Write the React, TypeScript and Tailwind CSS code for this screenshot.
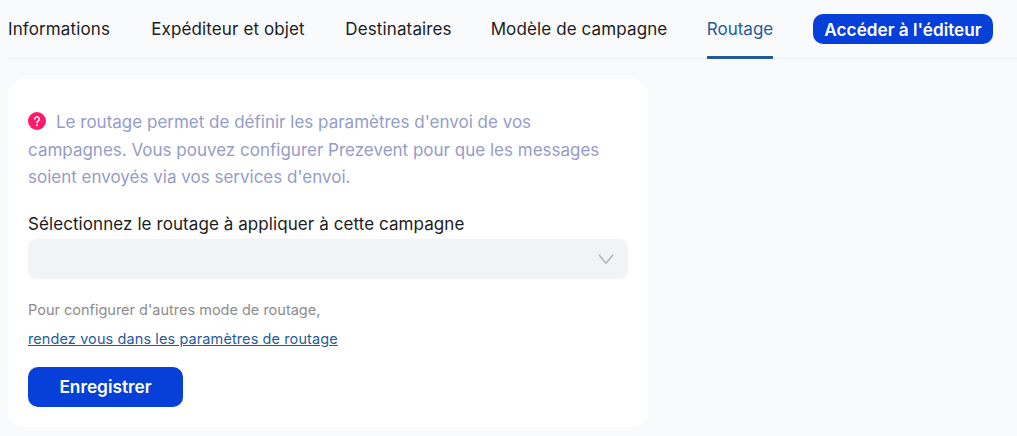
const tabs = [
  { label: 'Informations', width: 'w-[102px]' },
  { label: 'Expéditeur et objet', width: 'w-[156px]' },
  { label: 'Destinataires', width: 'w-[105px]' },
  { label: 'Modèle de campagne', width: 'w-[176px]' }
];

const App = () => {
  return (
    <div className="h-[436px] w-[1017px] overflow-hidden bg-[#f9fafc] pl-2 font-['Inter','Noto_Sans',sans-serif] text-[#1c1c21]">
      <nav className="flex h-[59px] items-center gap-10 border-b border-[#eef0f4]">
        {tabs.map((tab) => (
          <a key={tab.label} className={`flex h-[59px] items-center justify-center pt-[2px] text-[17px] tracking-[0.12px] whitespace-nowrap ${tab.width}`}>
            {tab.label}
          </a>
        ))}
        <a className="flex h-[59px] w-[66px] items-center justify-center border-b-[3px] border-[#1f5c99] pt-[5px] text-[17px] text-[#1f5c99]">
          Routage
        </a>
        <button className="h-[30px] w-[180px] rounded-[10px] bg-[#0640d9] pt-[1px] text-[17.2px] font-semibold text-white">
          Accéder à l'éditeur
        </button>
      </nav>

      <section className="mt-5 h-[348px] w-[640px] rounded-2xl bg-white px-5 pt-[30px]">
        <p className="w-[580px] text-[17px] leading-[27.5px] text-[#959cc9]">
          <svg viewBox="0 0 18 18" className="mr-2.5 inline-block h-[18px] w-[18px] align-[-2px]">
            <circle cx="9" cy="9" r="9" fill="#ff1a6c" />
            <path d="M6.7 7a2.3 2.3 0 1 1 3.5 2c-.8.5-1.2.9-1.2 1.8" fill="none" stroke="#fff" strokeWidth="1.5" strokeLinecap="round" />
            <circle cx="9" cy="13.2" r="0.95" fill="#fff" />
          </svg>
          Le routage permet de définir les paramètres d'envoi de vos campagnes. Vous pouvez configurer Prezevent pour que les messages soient envoyés via vos services d'envoi.
        </p>

        <label className="mt-5 block text-[17px] leading-6 tracking-[0.08px] text-[#1c1c21]">
          Sélectionnez le routage à appliquer à cette campagne
        </label>
        <div className="mt-[3px] flex h-10 w-[600px] items-center justify-end rounded-lg bg-[#f2f3f5] pr-[14px]">
          <svg viewBox="0 0 16 10" className="h-[10px] w-4" fill="none" stroke="#adb0b5" strokeWidth="1.4">
            <path d="M1 .8l7 8.4 7-8.4" />
          </svg>
        </div>

        <p className="mt-[21px] text-[14.5px] leading-5 text-[#8c8c8c]">Pour configurer d'autres mode de routage,</p>
        <a className="mt-[9px] block text-[14.5px] leading-5 tracking-[0.1px] text-[#1f5c99] underline">
          rendez vous dans les paramètres de routage
        </a>

        <button className="mt-[18px] h-10 w-[155px] rounded-[10px] bg-[#0640d9] pt-[1px] text-[17.3px] font-semibold text-white">
          Enregistrer
        </button>
      </section>
    </div>
  );
};

export default App;
